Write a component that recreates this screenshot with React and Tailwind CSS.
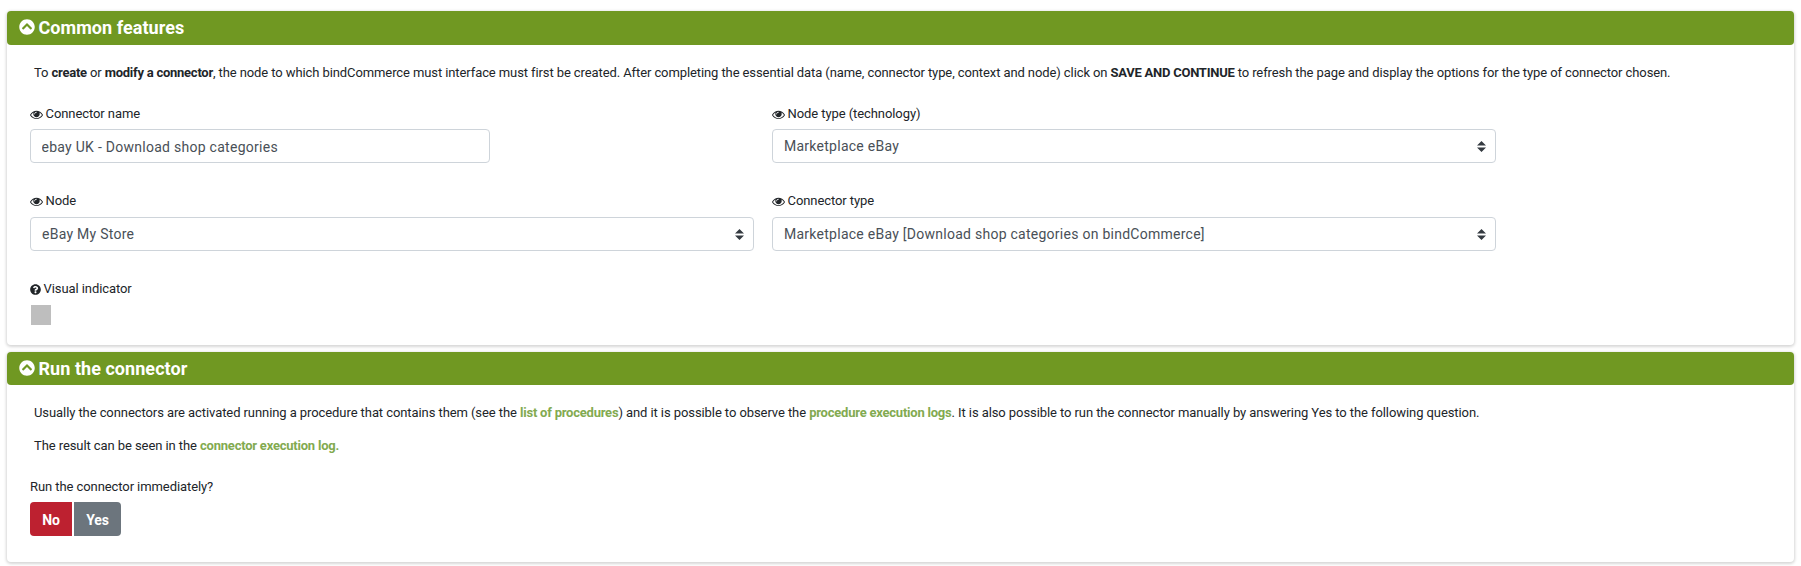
import React, { useState } from 'react';
import { FaChevronCircleUp, FaQuestionCircle } from 'react-icons/fa';

const EyeIcon = () => (
  <svg viewBox="0 0 1792 1536" className="w-[13px] h-[11px] shrink-0" fill="currentColor">
    <path d="M1664 832q-152-236-381-353 61 104 61 225 0 185-131.500 316.500t-316.500 131.500-316.500-131.500-131.500-316.500q0-121 61-225-229 117-381 353 133 205 333.500 326.500t434.500 121.500 434.500-121.500 333.500-326.500zm-720-384q0-20-14-34t-34-14q-125 0-214.500 89.500t-89.500 214.500q0 20 14 34t34 14 34-14 14-34q0-86 61-147t147-61q20 0 34-14t14-34zm848 384q0 34-20 69-140 230-376.500 368.500t-499.500 138.500-499.500-139-376.500-368q-20-35-20-69t20-69q140-229 376.500-368t499.500-139 499.500 139 376.500 368q20 35 20 69z" />
  </svg>
);

const Panel = ({ title, className, headerClass, children }) => (
  <section className={`rounded-[4px] bg-white shadow-[0_1px_3px_1px_rgba(0,0,0,0.16)] ${className}`}>
    <h2 className={`flex items-center pl-[11.5px] gap-[4px] rounded-[4px] bg-[#709822] text-white text-[18px] tracking-[0.05px] font-bold ${headerClass}`}>
      <FaChevronCircleUp className="w-4 h-4" />
      {title}
    </h2>
    {children}
  </section>
);

const Label = ({ icon, children }) => (
  <div className="flex items-center h-5 gap-[2.5px] text-[13px]">
    {icon}
    <span>{children}</span>
  </div>
);

const SelectBox = ({ value }) => (
  <div className="flex items-center justify-between h-[34px] pl-[11px] pr-[9px] border border-[#ced4da] rounded-[4px] text-[14px] tracking-[0.26px] text-[#495057]">
    <span>{value}</span>
    <svg viewBox="0 0 4 5" className="w-[9px] h-[11px]" preserveAspectRatio="none" fill="#343a40">
      <path d="M2 0L0 2.100h4zm0 5L0 2.900h4z" />
    </svg>
  </div>
);

const Bold = ({ children }) => (
  <b className="font-bold tracking-[-0.25px]">{children}</b>
);

const Link = ({ children }) => (
  <a href="#" className="font-bold tracking-[-0.22px] text-[#82aa50]">{children}</a>
);

export default function App() {
  const [run, setRun] = useState(false);

  return (
    <div className="h-[566px] pt-[11px] pl-[7px] pr-[7px] bg-white font-[Roboto,sans-serif] text-[13px] tracking-[-0.08px] text-[#212529] overflow-hidden">
      <Panel title="Common features" className="h-[334px]" headerClass="h-[34px] pb-[2px]">
        <p className="mt-[18px] ml-[27px] h-5 leading-5 tracking-[-0.096px] whitespace-nowrap">
          To <Bold>create</Bold> or <Bold>modify a connector</Bold>, the node to which bindCommerce must interface must first be created. After completing the essential data (name, connector type, context and node) click on <Bold>SAVE AND CONTINUE</Bold> to refresh the page and display the options for the type of connector chosen.
        </p>

        <div className="grid grid-cols-[724px_724px] gap-x-[18px] mt-[21px] ml-[23px]">
          <div className="h-[87px]">
            <Label icon={<EyeIcon />}>Connector name</Label>
            <input
              defaultValue="ebay UK - Download shop categories"
              className="block mt-[5px] w-[460px] h-[34px] px-[10.5px] pt-[2px] border border-[#ced4da] rounded-[4px] text-[14px] tracking-[0.27px] text-[#495057]"
            />
          </div>
          <div className="h-[87px]">
            <Label icon={<EyeIcon />}>Node type (technology)</Label>
            <div className="mt-[5px]">
              <SelectBox value="Marketplace eBay" />
            </div>
          </div>
          <div className="h-[88px]">
            <Label icon={<EyeIcon />}>Node</Label>
            <div className="mt-[6px]">
              <SelectBox value="eBay My Store" />
            </div>
          </div>
          <div className="h-[88px]">
            <Label icon={<EyeIcon />}>Connector type</Label>
            <div className="mt-[6px]">
              <SelectBox value="Marketplace eBay [Download shop categories on bindCommerce]" />
            </div>
          </div>
        </div>

        {/* Color swatch */}
        <div className="ml-[23px]">
          <Label icon={<FaQuestionCircle className="w-[11px] h-[11px]" />}>Visual indicator</Label>
          <div className="mt-[6px] ml-[1px] w-[20px] h-[20px] bg-[#bebebe]" />
        </div>
      </Panel>

      <Panel title="Run the connector" className="mt-[7px] h-[210px]" headerClass="h-[33px] pb-[1px]">
        <p className="mt-[18px] ml-[27px] h-5 leading-5 whitespace-nowrap">
          Usually the connectors are activated running a procedure that contains them (see the <Link>list of procedures</Link>) and it is possible to observe the <Link>procedure execution logs</Link>. It is also possible to run the connector manually by answering Yes to the following question.
        </p>
        <p className="mt-[13px] ml-[27px] h-5 leading-5">
          The result can be seen in the <Link>connector execution log.</Link>
        </p>

        <div className="mt-[21px] ml-[23px]">
          <Label>Run the connector immediately?</Label>
          <div className="flex gap-[2px] mt-[5px] h-[34px] text-[14px] font-bold text-white">
            <button
              onClick={() => setRun(false)}
              className={`w-[42px] pt-[2px] rounded-l-[4px] ${run ? 'bg-[#6c757d]' : 'bg-[#bd2130]'}`}
            >
              No
            </button>
            <button
              onClick={() => setRun(true)}
              className={`w-[47px] pt-[2px] rounded-r-[4px] ${run ? 'bg-[#28a745]' : 'bg-[#6c757d]'}`}
            >
              Yes
            </button>
          </div>
        </div>
      </Panel>
    </div>
  );
}
